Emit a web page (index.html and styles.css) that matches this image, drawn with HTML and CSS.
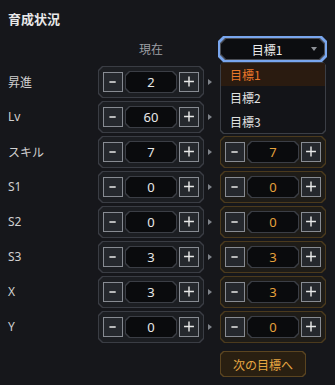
FILE: index.html
```html
<!DOCTYPE html>
<html lang="ja">
<head>
<meta charset="utf-8">
<title>育成状況</title>
<link rel="stylesheet" href="styles.css">
</head>
<body>
<div class="page">
  <h1 class="title">育成状況</h1>
  <div class="grid">
    <div></div>
    <div class="colhead">現在</div>
    <div></div>
    <div class="select-wrap">
      <div class="select">
        <span class="sel-text">目標1</span>
        <span class="caret"></span>
      </div>
      <div class="menu ch">
        <div class="item active">目標1</div>
        <div class="item">目標2</div>
        <div class="item">目標3</div>
      </div>
    </div>

    <div class="label">昇進</div>
    <div class="stepper ch"><span class="btn"><svg viewBox="0 0 20 20"><path d="M6 10H13"/></svg></span><span class="val ch"><b>2</b></span><span class="btn"><svg viewBox="0 0 20 20"><path d="M4.5 9.5H15.5M10 4V15"/></svg></span></div>
    <div class="arrow-cell"><span class="arrow"></span></div>
    <div class="stepper target ch"><span class="btn"><svg viewBox="0 0 20 20"><path d="M6 10H13"/></svg></span><span class="val ch"><b>2</b></span><span class="btn"><svg viewBox="0 0 20 20"><path d="M4.5 9.5H15.5M10 4V15"/></svg></span></div>

    <div class="label">Lv</div>
    <div class="stepper ch"><span class="btn"><svg viewBox="0 0 20 20"><path d="M6 10H13"/></svg></span><span class="val ch"><b>60</b></span><span class="btn"><svg viewBox="0 0 20 20"><path d="M4.5 9.5H15.5M10 4V15"/></svg></span></div>
    <div class="arrow-cell"><span class="arrow"></span></div>
    <div class="stepper target ch"><span class="btn"><svg viewBox="0 0 20 20"><path d="M6 10H13"/></svg></span><span class="val ch"><b>60</b></span><span class="btn"><svg viewBox="0 0 20 20"><path d="M4.5 9.5H15.5M10 4V15"/></svg></span></div>

    <div class="label">スキル</div>
    <div class="stepper ch"><span class="btn"><svg viewBox="0 0 20 20"><path d="M6 10H13"/></svg></span><span class="val ch"><b>7</b></span><span class="btn"><svg viewBox="0 0 20 20"><path d="M4.5 9.5H15.5M10 4V15"/></svg></span></div>
    <div class="arrow-cell"><span class="arrow"></span></div>
    <div class="stepper target ch"><span class="btn"><svg viewBox="0 0 20 20"><path d="M6 10H13"/></svg></span><span class="val ch"><b>7</b></span><span class="btn"><svg viewBox="0 0 20 20"><path d="M4.5 9.5H15.5M10 4V15"/></svg></span></div>

    <div class="label">S1</div>
    <div class="stepper ch"><span class="btn"><svg viewBox="0 0 20 20"><path d="M6 10H13"/></svg></span><span class="val ch"><b>0</b></span><span class="btn"><svg viewBox="0 0 20 20"><path d="M4.5 9.5H15.5M10 4V15"/></svg></span></div>
    <div class="arrow-cell"><span class="arrow"></span></div>
    <div class="stepper target ch"><span class="btn"><svg viewBox="0 0 20 20"><path d="M6 10H13"/></svg></span><span class="val ch"><b>0</b></span><span class="btn"><svg viewBox="0 0 20 20"><path d="M4.5 9.5H15.5M10 4V15"/></svg></span></div>

    <div class="label">S2</div>
    <div class="stepper ch"><span class="btn"><svg viewBox="0 0 20 20"><path d="M6 10H13"/></svg></span><span class="val ch"><b>0</b></span><span class="btn"><svg viewBox="0 0 20 20"><path d="M4.5 9.5H15.5M10 4V15"/></svg></span></div>
    <div class="arrow-cell"><span class="arrow"></span></div>
    <div class="stepper target ch"><span class="btn"><svg viewBox="0 0 20 20"><path d="M6 10H13"/></svg></span><span class="val ch"><b>0</b></span><span class="btn"><svg viewBox="0 0 20 20"><path d="M4.5 9.5H15.5M10 4V15"/></svg></span></div>

    <div class="label">S3</div>
    <div class="stepper ch"><span class="btn"><svg viewBox="0 0 20 20"><path d="M6 10H13"/></svg></span><span class="val ch"><b>3</b></span><span class="btn"><svg viewBox="0 0 20 20"><path d="M4.5 9.5H15.5M10 4V15"/></svg></span></div>
    <div class="arrow-cell"><span class="arrow"></span></div>
    <div class="stepper target ch"><span class="btn"><svg viewBox="0 0 20 20"><path d="M6 10H13"/></svg></span><span class="val ch"><b>3</b></span><span class="btn"><svg viewBox="0 0 20 20"><path d="M4.5 9.5H15.5M10 4V15"/></svg></span></div>

    <div class="label">X</div>
    <div class="stepper ch"><span class="btn"><svg viewBox="0 0 20 20"><path d="M6 10H13"/></svg></span><span class="val ch"><b>3</b></span><span class="btn"><svg viewBox="0 0 20 20"><path d="M4.5 9.5H15.5M10 4V15"/></svg></span></div>
    <div class="arrow-cell"><span class="arrow"></span></div>
    <div class="stepper target ch"><span class="btn"><svg viewBox="0 0 20 20"><path d="M6 10H13"/></svg></span><span class="val ch"><b>3</b></span><span class="btn"><svg viewBox="0 0 20 20"><path d="M4.5 9.5H15.5M10 4V15"/></svg></span></div>

    <div class="label">Y</div>
    <div class="stepper ch"><span class="btn"><svg viewBox="0 0 20 20"><path d="M6 10H13"/></svg></span><span class="val ch"><b>0</b></span><span class="btn"><svg viewBox="0 0 20 20"><path d="M4.5 9.5H15.5M10 4V15"/></svg></span></div>
    <div class="arrow-cell"><span class="arrow"></span></div>
    <div class="stepper target ch"><span class="btn"><svg viewBox="0 0 20 20"><path d="M6 10H13"/></svg></span><span class="val ch"><b>0</b></span><span class="btn"><svg viewBox="0 0 20 20"><path d="M4.5 9.5H15.5M10 4V15"/></svg></span></div>
  </div>
  <div class="footer">
    <button class="next ch"><span>次の目標へ</span></button>
  </div>
</div>
</body>
</html>
```

FILE: styles.css
```css
html, body {
  margin: 0;
  padding: 0;
  background: #16171b;
}
body {
  font-family: "Noto Sans", "Noto Sans CJK JP", sans-serif;
  color: #e6e6e6;
  width: 335px;
  height: 385px;
  overflow: hidden;
}
.page {
  padding: 0 8px;
}
.title {
  margin: 10px 0 0;
  height: 18px;
  line-height: 18px;
  font-size: 13px;
  font-weight: 700;
  color: #e8e8e8;
  font-family: "Noto Sans CJK JP", sans-serif;
}

/* chamfered box: border colour layer + inset fill layer */
.ch {
  --c: 4px;
  --bd: #3a3d44;
  --bg: #1c1e22;
  position: relative;
  background: var(--bd);
  clip-path: polygon(var(--c) 0, calc(100% - var(--c)) 0, 100% var(--c), 100% calc(100% - var(--c)), calc(100% - var(--c)) 100%, var(--c) 100%, 0 calc(100% - var(--c)), 0 var(--c));
}
.ch::before {
  content: "";
  position: absolute;
  inset: 1px;
  background: var(--bg);
  clip-path: polygon(var(--c) 0, calc(100% - var(--c)) 0, 100% var(--c), 100% calc(100% - var(--c)), calc(100% - var(--c)) 100%, var(--c) 100%, 0 calc(100% - var(--c)), 0 var(--c));
}
.ch > * {
  position: relative;
}

.grid {
  margin-top: 8px;
  display: grid;
  grid-template-columns: 90px 106px 16px 106px;
  grid-auto-rows: 32px;
  grid-template-rows: 26px;
  row-gap: 3px;
}
.grid > .label {
  margin-top: 1px;
}
.colhead {
  display: flex;
  align-items: center;
  justify-content: center;
  font-size: 12px;
  color: #9d9fa4;
  font-family: "Noto Sans CJK JP", sans-serif;
  padding-bottom: 1px;
}
.label {
  display: flex;
  align-items: center;
  font-size: 12px;
  color: #d0d0d0;
  font-family: "Noto Sans", "Noto Sans CJK JP", sans-serif;
}
.grid > div:nth-child(5) {
  margin-top: 1px;
}

.stepper {
  display: flex;
  align-items: center;
  gap: 2px;
  padding: 0 5px;
  box-sizing: border-box;
  height: 32px;
}
.grid > .stepper {
  margin-top: 1px;
}
.stepper.target {
  --bd: #4b3a1d;
  --bg: #1e1c18;
}
.btn {
  width: 20px;
  height: 20px;
  box-sizing: border-box;
  border: 1px solid #878b92;
  background: #25282d;
  display: flex;
  align-items: center;
  justify-content: center;
}
.btn svg {
  width: 18px;
  height: 18px;
  fill: none;
  stroke: #e8e8e8;
  stroke-width: 1.6;
}
.val {
  --c: 4px;
  --bd: #3b3e45;
  --bg: #0a0b0d;
  width: 52px;
  height: 22px;
  display: flex;
  align-items: center;
  justify-content: center;
}
.val b {
  font-weight: 400;
  font-size: 13px;
  color: #e8e8e8;
}
.target .val b {
  color: #e6a23c;
}

.arrow-cell {
  display: flex;
  align-items: center;
  margin-top: 1px;
}
.arrow {
  width: 0;
  height: 0;
  margin-left: 4px;
  border-left: 4px solid #7f8389;
  border-top: 3px solid transparent;
  border-bottom: 3px solid transparent;
}

.select-wrap {
  position: relative;
  margin: 0 -1px 0 -2px;
  z-index: 5;
}
.select {
  --c: 5px;
  position: relative;
  height: 26px;
  background: #79a6ee;
  clip-path: polygon(var(--c) 0, calc(100% - var(--c)) 0, 100% var(--c), 100% calc(100% - var(--c)), calc(100% - var(--c)) 100%, var(--c) 100%, 0 calc(100% - var(--c)), 0 var(--c));
  display: flex;
  align-items: center;
  justify-content: center;
  padding-right: 11px;
  font-size: 12px;
  color: #ececec;
  font-family: "Noto Sans CJK JP", sans-serif;
}
.select::before,
.select::after {
  content: "";
  position: absolute;
  clip-path: polygon(var(--c) 0, calc(100% - var(--c)) 0, 100% var(--c), 100% calc(100% - var(--c)), calc(100% - var(--c)) 100%, var(--c) 100%, 0 calc(100% - var(--c)), 0 var(--c));
}
.select::before {
  inset: 2px;
  background: #4a4d55;
}
.select::after {
  inset: 3px;
  background: #0c0d10;
}
.sel-text {
  position: relative;
  z-index: 1;
  padding-top: 1px;
}
.caret {
  position: absolute;
  z-index: 1;
  right: 10px;
  top: 11px;
  width: 0;
  height: 0;
  border-top: 4px solid #8e9197;
  border-left: 3px solid transparent;
  border-right: 3px solid transparent;
}

.menu {
  --c: 3px;
  --bd: #3b3e45;
  --bg: #131418;
  position: absolute;
  top: 26px;
  left: 2px;
  right: 1px;
  height: 72px;
  padding: 1px;
  box-sizing: border-box;
}
.item {
  height: 23.3px;
  display: flex;
  align-items: center;
  padding-left: 9px;
  font-size: 12px;
  color: #e2e2e2;
  font-family: "Noto Sans CJK JP", sans-serif;
}
.item.active {
  background: #2a1b10;
  color: #e9772a;
}

.footer {
  margin-top: 9px;
  padding-left: 212px;
}
.next {
  --c: 3px;
  --bd: #5a4420;
  --bg: #291f11;
  width: 86px;
  height: 26px;
  border: none;
  padding: 0;
  margin: 0;
  display: flex;
  align-items: center;
  justify-content: center;
  font-family: "Noto Sans CJK JP", sans-serif;
  font-size: 12px;
  color: #e6a642;
}
```
